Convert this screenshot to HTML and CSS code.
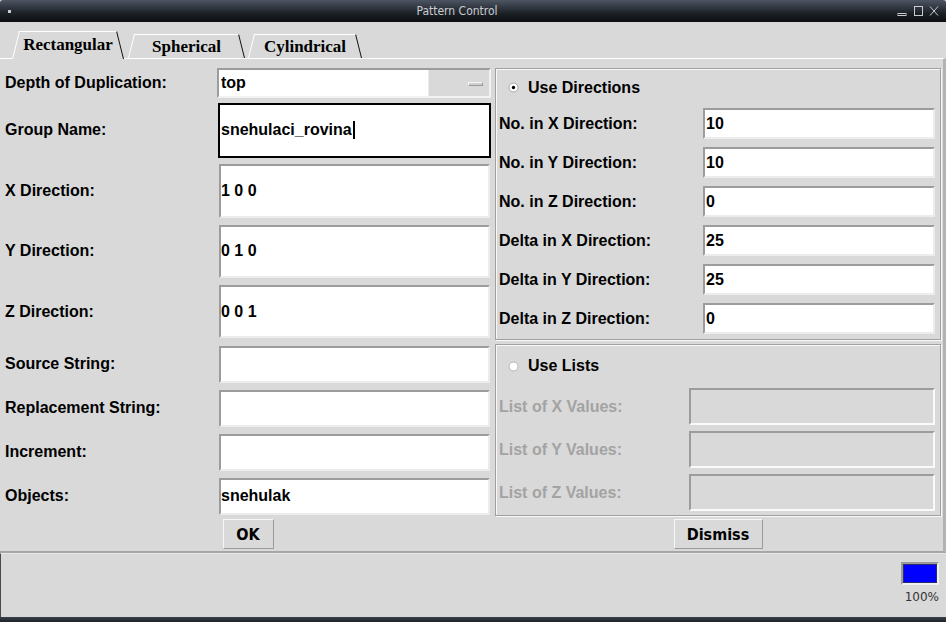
FILE: index.html
```html
<html lang="en">
<head>
    <meta charset="UTF-8">
    <title>Pattern Control</title>
    <link rel="stylesheet" href="styles.css">
</head>
<body>
<div class="window">
    <div class="titlebar">
        <div class="tb-left"><span class="tb-icon"></span></div>
        <div class="tb-title">Pattern Control</div>
        <div class="tb-controls">
            <svg width="46" height="12" viewBox="0 0 46 12">
                <rect x="4" y="7.5" width="8" height="2" fill="none" stroke="#c9ccd0" stroke-width="1"/>
                <rect x="20.5" y="0.5" width="8" height="9" fill="none" stroke="#c9ccd0" stroke-width="1"/>
                <path d="M36 0.5 L44 9.5 M44 0.5 L36 9.5" stroke="#c9ccd0" stroke-width="1" fill="none"/>
            </svg>
        </div>
    </div>

    <div class="tabs">
        <div class="tab tab-active tab-rect">Rectangular</div>
        <div class="tab tab-sph">Spherical</div>
        <div class="tab tab-cyl">Cylindrical</div>
    </div>

    <div class="notebook">
        <div class="main">
            <div class="left">
                <label>Depth of Duplication:</label>
                <div class="combo">
                    <div class="combo-entry">top</div>
                    <div class="combo-btn"><span class="indicator"></span></div>
                </div>

                <label>Group Name:</label>
                <div class="entry entry-focus h55">snehulaci_rovina<span class="cursor"></span></div>

                <label>X Direction:</label>
                <div class="entry h54">1 0 0</div>

                <label>Y Direction:</label>
                <div class="entry h53">0 1 0</div>

                <label>Z Direction:</label>
                <div class="entry h53">0 0 1</div>

                <label>Source String:</label>
                <div class="entry h37"></div>

                <label>Replacement String:</label>
                <div class="entry h37"></div>

                <label>Increment:</label>
                <div class="entry h37"></div>

                <label>Objects:</label>
                <div class="entry h37">snehulak</div>
            </div>

            <div class="right">
                <div class="frame frame-dirs">
                    <div class="radio-row">
                        <svg class="radio" width="11" height="11" viewBox="0 0 11 11">
                            <circle cx="5.5" cy="5.5" r="4.5" fill="#fff" stroke="#a9a9a9" stroke-width="1"/>
                            <circle cx="5.5" cy="5.5" r="1.7" fill="#000"/>
                        </svg>
                        <span>Use Directions</span>
                    </div>
                    <div class="rows rows-dirs">
                        <label>No. in X Direction:</label>
                        <div class="entry h31">10</div>
                        <label>No. in Y Direction:</label>
                        <div class="entry h31">10</div>
                        <label>No. in Z Direction:</label>
                        <div class="entry h31">0</div>
                        <label>Delta in X Direction:</label>
                        <div class="entry h31">25</div>
                        <label>Delta in Y Direction:</label>
                        <div class="entry h31">25</div>
                        <label>Delta in Z Direction:</label>
                        <div class="entry h31">0</div>
                    </div>
                </div>

                <div class="frame frame-lists">
                    <div class="radio-row">
                        <svg class="radio" width="11" height="11" viewBox="0 0 11 11">
                            <circle cx="5.5" cy="5.5" r="4.5" fill="#fff" stroke="#b4b4b4" stroke-width="1"/>
                        </svg>
                        <span>Use Lists</span>
                    </div>
                    <div class="rows rows-lists">
                        <label class="disabled">List of X Values:</label>
                        <div class="entry entry-disabled h37"></div>
                        <label class="disabled">List of Y Values:</label>
                        <div class="entry entry-disabled h37"></div>
                        <label class="disabled">List of Z Values:</label>
                        <div class="entry entry-disabled h37"></div>
                    </div>
                </div>
            </div>
        </div>

        <div class="buttons">
            <div class="btn-cell"><button class="btn btn-ok">OK</button></div>
            <div class="btn-cell"><button class="btn btn-dismiss">Dismiss</button></div>
        </div>
    </div>

    <div class="status">
        <div class="meter"><div class="meter-bar"></div></div>
        <div class="meter-text">100%</div>
    </div>
    <div class="frame-bottom"></div>
</div>
</body>
</html>
```

FILE: styles.css
```css
body { margin: 0; background-color: #d9d9d9; font-family: "Liberation Sans", Arial, sans-serif; }
.window { width: 946px; height: 622px; overflow: hidden; background-color: #d9d9d9; }

/* title bar */
.titlebar { height: 22px; display: flex; align-items: center; background: linear-gradient(#4d5563, #1c2127 60%, #0c0e11); border-radius: 3px 3px 0 0; }
.tb-left { width: 20px; height: 22px; display: flex; align-items: center; }
.tb-icon { display: block; width: 3px; height: 3px; margin-left: 8px; margin-top: 1px; background-color: #c9ccd0; }
.tb-title { flex: 1; text-align: center; color: #c9ccd0; font-family: "DejaVu Sans Condensed", "DejaVu Sans", sans-serif; font-stretch: condensed; font-size: 12px; }
.tb-controls { width: 52px; height: 22px; display: flex; align-items: center; padding-top: 2px; box-sizing: border-box; }

/* tabs */
.tabs { height: 36px; display: flex; align-items: flex-end; padding-left: 12px; font-family: "Liberation Serif", "Times New Roman", serif; font-weight: bold; font-size: 17px; }
.tab { position: relative; height: 24px; box-sizing: border-box; padding-top: 3px; line-height: 20px; text-align: center; }
.tab::before { content: ''; position: absolute; left: 0; top: 0; bottom: 0; width: 60%; border-left: 1px solid #fff; border-top: 1px solid #fff; transform-origin: 0 100%; transform: skewX(-14deg); }
.tab::after { content: ''; position: absolute; right: 0; top: 0; bottom: 0; width: 60%; border-right: 1px solid #111; border-top: 1px solid #fff; transform-origin: 100% 100%; transform: skewX(14deg); }
.tab-active { height: 28px; margin-bottom: -1px; padding-top: 4px; background-color: #d9d9d9; z-index: 1; }
.tab-rect { width: 112px; }
.tab-sph { width: 117px; margin-left: 4px; }
.tab-cyl { width: 114px; margin-left: 3px; }

/* notebook */
.notebook { border-top: 1px solid #fff; border-right: 3px solid #b3b3b3; border-bottom: 2px solid #a6a6a6; padding: 7px 0 2px 5px; }
.main { display: grid; grid-template-columns: 486px 446px; column-gap: 4px; height: 452px; }

label { font-weight: bold; font-size: 16px; color: #000; }
label.disabled { color: #a3a3a3; }

.left { display: grid; grid-template-columns: 212px 274px; grid-template-rows: 34px 60px 61px 60px 61px 44px 44px 44px 44px; align-items: center; }

.entry { background-color: #fff; box-sizing: border-box; border: 2px solid; border-color: #9c9c9c #ececec #ececec #9c9c9c; padding-left: 0; display: flex; align-items: center; font-weight: bold; font-size: 16px; }
.left .entry { margin: 0 1px 0 2px; }
.entry-focus { border: 2px solid #000; margin: 0 0 0 1px !important; padding-left: 1px; }
.entry-disabled { background-color: #d9d9d9; border-color: #9c9c9c #fafafa #fafafa #9c9c9c; }
.h31 { height: 31px; padding-left: 1px; }
.h37 { height: 37px; }
.h53 { height: 53px; }
.h54 { height: 54px; }
.h55 { height: 55px; }
.cursor { display: inline-block; width: 2px; height: 18px; background-color: #000; margin-left: 1px; }

.combo { height: 30px; box-sizing: border-box; display: flex; border: 2px solid; border-color: #9c9c9c #f2f2f2 #f2f2f2 #9c9c9c; }
.combo-entry { flex: 1; background-color: #fff; padding-left: 2px; display: flex; align-items: center; font-weight: bold; font-size: 16px; }
.combo-btn { width: 61px; display: flex; align-items: center; justify-content: flex-end; padding-right: 6px; box-sizing: border-box; border-left: 1px solid #ececec; }
.indicator { display: block; width: 15px; height: 4px; box-sizing: border-box; margin-top: 2px; background-color: #cfcfcf; border-top: 1px solid #f6f6f6; border-bottom: 1px solid #9a9a9a; border-left: 1px solid #f6f6f6; border-right: 1px solid #9a9a9a; }

/* right frames */
.right { display: flex; flex-direction: column; gap: 4px; padding-top: 2px; }
.frame { border: 1px solid #a0a0a0; box-shadow: inset 1px 1px 0 #f8f8f8, 1px 1px 0 #f8f8f8; padding: 0 0 1px 3px; }
.frame-dirs { height: 272px; box-sizing: border-box; }
.frame-lists { height: 172px; box-sizing: border-box; }
.radio-row { display: flex; align-items: center; padding-left: 9px; padding-top: 2px; box-sizing: border-box; font-weight: bold; font-size: 16px; }
.frame-dirs .radio-row { height: 35px; }
.frame-lists .radio-row { height: 40px; }
.radio { margin-right: 9px; }
.rows { display: grid; align-items: center; }
.rows-dirs { grid-template-columns: 204px 232px; grid-auto-rows: 39px; }
.rows-lists { grid-template-columns: 190px 246px; grid-auto-rows: 43px; }

/* buttons */
.buttons { display: grid; grid-template-columns: 486px 446px; column-gap: 4px; margin-top: 1px; height: 30px; }
.btn-cell { display: flex; justify-content: center; }
.btn { height: 30px; background-color: #d9d9d9; border: 1px solid; border-color: #f6f6f6 #9a9a9a #9a9a9a #f6f6f6; font-family: "DejaVu Sans Condensed", "DejaVu Sans", sans-serif; font-stretch: condensed; font-weight: bold; font-size: 16px; color: #000; padding: 0; }
.btn-ok { width: 51px; }
.btn-dismiss { width: 89px; }

/* status */
.status { height: 64px; box-sizing: border-box; border-top: 1px solid #e8e8e8; border-left: 1px solid #4a4a4a; display: flex; flex-direction: column; align-items: flex-end; padding: 8px 7px 0 0; }
.meter { width: 38px; height: 23px; box-sizing: border-box; border: 2px solid; border-color: #9a9a9a #f0f0f0 #f0f0f0 #9a9a9a; }
.meter-bar { height: 100%; box-sizing: border-box; background-color: #0000ff; border: 1px solid #2c2c70; }
.meter-text { margin-top: 5px; margin-right: 0; font-family: "DejaVu Sans", sans-serif; font-size: 12px; color: #333; }
.frame-bottom { height: 5px; background: linear-gradient(#3a4048, #1f2329); }
```
